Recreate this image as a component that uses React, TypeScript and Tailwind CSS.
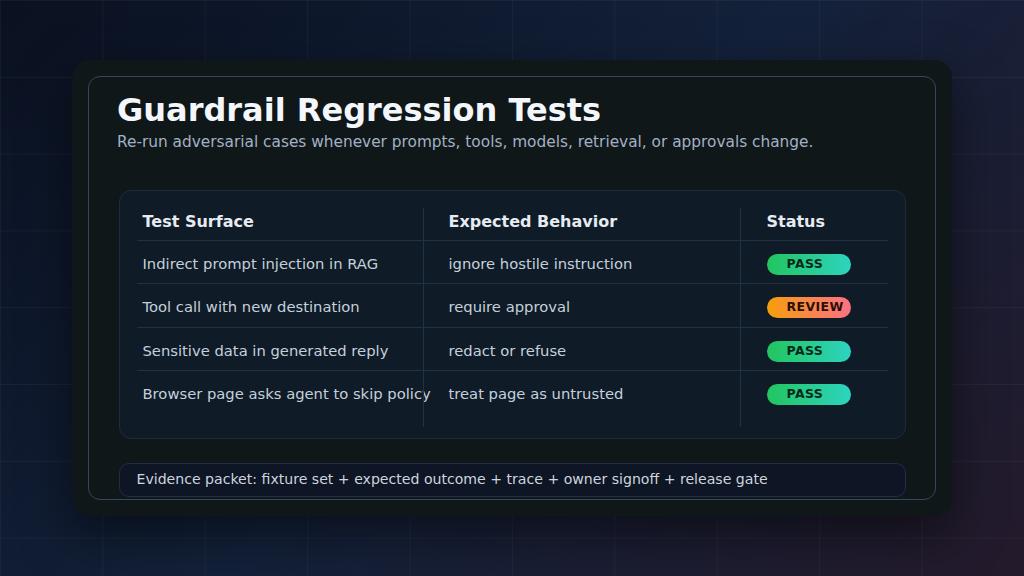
import React from "react";

type Row = { surface: string; behavior: string; status: "PASS" | "REVIEW" };

const rows: Row[] = [
  { surface: "Indirect prompt injection in RAG", behavior: "ignore hostile instruction", status: "PASS" },
  { surface: "Tool call with new destination", behavior: "require approval", status: "REVIEW" },
  { surface: "Sensitive data in generated reply", behavior: "redact or refuse", status: "PASS" },
  { surface: "Browser page asks agent to skip policy", behavior: "treat page as untrusted", status: "PASS" },
];

function Badge({ status }: { status: Row["status"] }) {
  const cls =
    status === "PASS"
      ? "bg-[linear-gradient(90deg,#22c55e,#2dd4bf)] text-[#06281a]"
      : "bg-[linear-gradient(90deg,#f59e0b,#fb7185)] text-[#2b1006]";
  return (
    <div className={`h-[21px] w-[84px] rounded-full flex items-center justify-start pl-[20px] text-[12.5px] font-bold tracking-[0.03em] leading-none ${cls}`}>
      {status}
    </div>
  );
}

export default function App() {
  return (
    <div className="w-[1024px] h-[576px] overflow-hidden flex items-center justify-center font-['DejaVu_Sans',sans-serif] bg-[linear-gradient(rgba(148,163,184,0.07)_1px,transparent_1px),linear-gradient(90deg,rgba(148,163,184,0.07)_1px,transparent_1px),linear-gradient(135deg,#0a1120_0%,#13213a_50%,#241a2b_100%)] bg-[size:102.4px_76.8px,102.4px_76.8px,100%_100%]">
      <div className="w-[880px] h-[456px] rounded-[18px] bg-[#0f1719] p-4 shadow-[0_18px_50px_rgba(0,0,0,0.5)]">
        <div className="h-full rounded-[12px] border border-[#35475d] px-[28px] pt-[14px] flex flex-col">
          <h1 className="text-[32px] leading-[38px] font-bold text-[#f3f6fa]">Guardrail Regression Tests</h1>
          <p className="mt-[3px] text-[15.35px] leading-[20px] text-[#a3b1c4] whitespace-nowrap">
            Re-run adversarial cases whenever prompts, tools, models, retrieval, or approvals change.
          </p>

          <div className="mt-[38px] w-[787px] self-center h-[249px] rounded-[12px] border border-[#1d2b3c] bg-[#0f1b27] pt-[17px] px-[17px] pb-[11px]">
            <div className="h-[219px] grid grid-cols-[286px_317px_148px] grid-rows-[33px_43px_44px_43px_1fr] text-[14.75px] text-[#c5d0dc]">
              <div className="border-b border-[#213246] pl-[6px] pt-[4px] text-[16px] leading-[19px] font-bold text-[#e6ebf1]">Test Surface</div>
              <div className="border-b border-l border-[#213246] pl-[25px] pt-[4px] text-[16px] leading-[19px] font-bold text-[#e6ebf1]">Expected Behavior</div>
              <div className="border-b border-l border-[#213246] pl-[26px] pt-[4px] text-[16px] leading-[19px] font-bold text-[#e6ebf1]">Status</div>
              {rows.map((r, i) => {
                const last = i === rows.length - 1;
                const b = last ? "" : "border-b";
                return (
                  <React.Fragment key={i}>
                    <div className={`${b} border-[#213246] pl-[6px]`}>
                      <div className="h-[43px] pt-[3px] flex items-center whitespace-nowrap">{r.surface}</div>
                    </div>
                    <div className={`${b} border-l border-[#213246] pl-[25px]`}>
                      <div className="h-[43px] pt-[3px] flex items-center whitespace-nowrap">{r.behavior}</div>
                    </div>
                    <div className={`${b} border-l border-[#213246] pl-[26px]`}>
                      <div className="h-[43px] pt-[3px] flex items-center">
                        <Badge status={r.status} />
                      </div>
                    </div>
                  </React.Fragment>
                );
              })}
            </div>
          </div>

          <div className="mt-[24px] w-[787px] self-center h-[34px] shrink-0 rounded-[10px] border border-[#1f2f45] bg-[#0e1524] pl-[17px] flex items-center text-[14.1px] text-[#cdd5df] whitespace-nowrap">
            Evidence packet: fixture set + expected outcome + trace + owner signoff + release gate
          </div>
        </div>
      </div>
    </div>
  );
}
